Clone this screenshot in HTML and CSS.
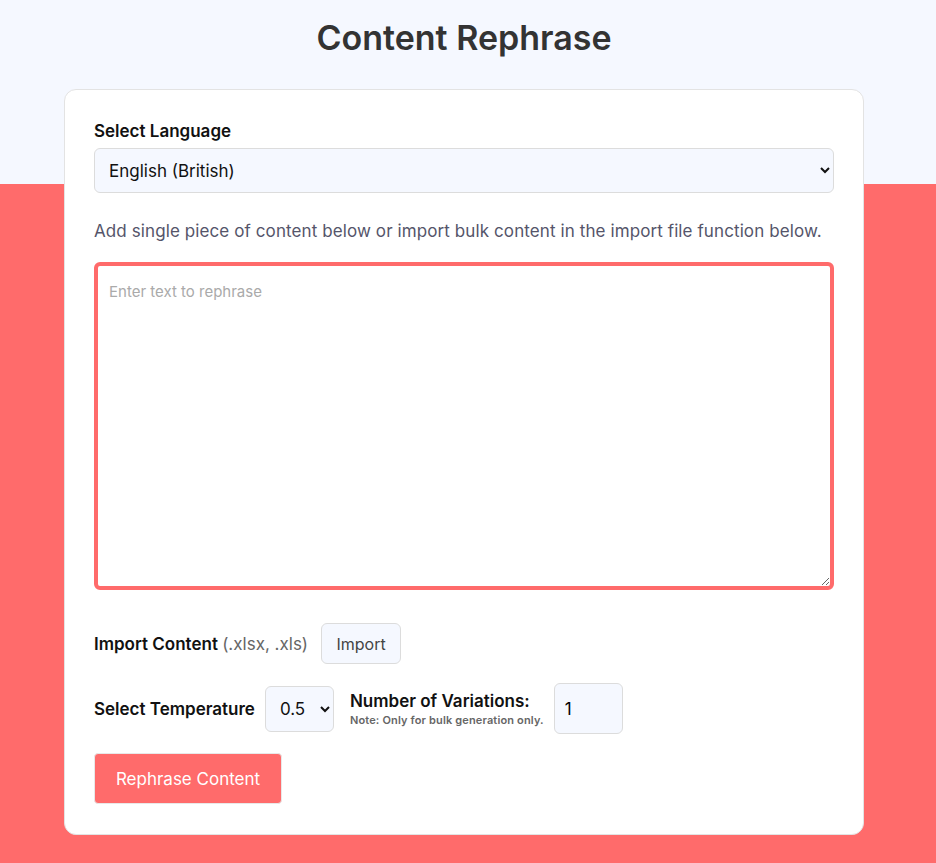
FILE: index.html
```html
<!DOCTYPE html>
<html lang="en">
<head>
<meta charset="utf-8">
<title>Content Rephrase</title>
<link rel="stylesheet" href="styles.css">
</head>
<body>
<div class="page">
  <h1 class="title">Content Rephrase</h1>
  <div class="card">
    <label class="label" for="lang">Select Language</label>
    <select id="lang" class="select-lang">
      <option>English (British)</option>
      <option>English (American)</option>
    </select>
    <p class="hint">Add single piece of content below or import bulk content in the import file function below.</p>
    <textarea class="text-input" placeholder="Enter text to rephrase"></textarea>
    <div class="import-row">
      <span class="label-inline">Import Content <span class="muted">(.xlsx, .xls)</span></span>
      <button class="btn-light">Import</button>
    </div>
    <div class="options-row">
      <span class="label-inline">Select Temperature</span>
      <select class="select-temp">
        <option>0.5</option>
      </select>
      <div class="variations">
        <span class="label-inline">Number of Variations:</span>
        <span class="note">Note: Only for bulk generation only.</span>
      </div>
      <input class="num-input" type="text" value="1">
    </div>
    <button class="btn-primary">Rephrase Content</button>
  </div>
</div>
</body>
</html>
```
FILE: styles.css
```css
* { box-sizing: border-box; }
html, body { margin: 0; padding: 0; }
body {
  font-family: "Inter", "Noto Sans", sans-serif;
  background: linear-gradient(#f5f8ff 0, #f5f8ff 184px, #ff6b6b 184px);
  min-height: 863px;
  color: #111;
}
.page {
  width: 800px;
  margin: 0 0 0 64px;
  padding-top: 14px;
}
.title {
  margin: 0 0 27px;
  text-align: center;
  font-size: 34px;
  font-weight: 600;
  color: #333;
  line-height: 48px;
}
.card {
  background: #fff;
  border: 1px solid #e3e3e3;
  border-radius: 12px;
  padding: 29px 29px 30px;
  display: flex;
  flex-direction: column;
}
.label {
  font-size: 17px;
  font-weight: 600;
  line-height: 24px;
  margin-bottom: 5px;
}
.select-lang {
  height: 45px;
  font-family: inherit;
  font-size: 17px;
  color: #111;
  background: #f5f8ff;
  border: 1px solid #dcdcdc;
  border-radius: 6px;
  padding: 0 10px;
}
.hint {
  margin: 24px 0 17px;
  font-size: 17px;
  line-height: 28px;
  color: #55556a;
  letter-spacing: 0.1px;
}
.text-input {
  height: 328px;
  border: 4px solid #ff6b6b;
  border-radius: 6px;
  padding: 16px 11px;
  font-family: inherit;
  font-size: 15px;
  resize: vertical;
  outline: none;
}
.text-input::placeholder { color: #aaa; }
.import-row {
  display: flex;
  align-items: center;
  margin-top: 33px;
  gap: 13px;
}
.label-inline {
  font-size: 17px;
  font-weight: 600;
}
.muted {
  font-weight: 400;
  color: #666;
}
.btn-light {
  height: 41px;
  width: 80px;
  padding: 0;
  font-family: inherit;
  font-size: 16px;
  color: #444;
  background: #f5f8ff;
  border: 1px solid #dcdcdc;
  border-radius: 6px;
}
.options-row {
  display: flex;
  align-items: center;
  margin-top: 19px;
}
.select-temp {
  margin-left: 10px;
  width: 69px;
  height: 46px;
  font-family: inherit;
  font-size: 17px;
  color: #111;
  background: #f5f8ff;
  border: 1px solid #dcdcdc;
  border-radius: 6px;
  padding: 0 10px;
}
.variations {
  display: flex;
  flex-direction: column;
  margin-left: 16px;
}
.note {
  font-size: 11px;
  font-weight: 600;
  color: #666;
  margin-top: 2px;
  letter-spacing: 0.15px;
}
.num-input {
  margin-left: 10px;
  width: 69px;
  height: 51px;
  font-family: inherit;
  font-size: 17px;
  padding: 0 10px;
  background: #f5f8ff;
  border: 1px solid #dcdcdc;
  border-radius: 6px;
}
.btn-primary {
  align-self: flex-start;
  margin-top: 19px;
  width: 188px;
  height: 51px;
  background: #ff6b6b;
  color: #fff;
  font-family: inherit;
  font-size: 17px;
  border: 1px solid #e8e8e8;
  border-radius: 4px;
}
```
